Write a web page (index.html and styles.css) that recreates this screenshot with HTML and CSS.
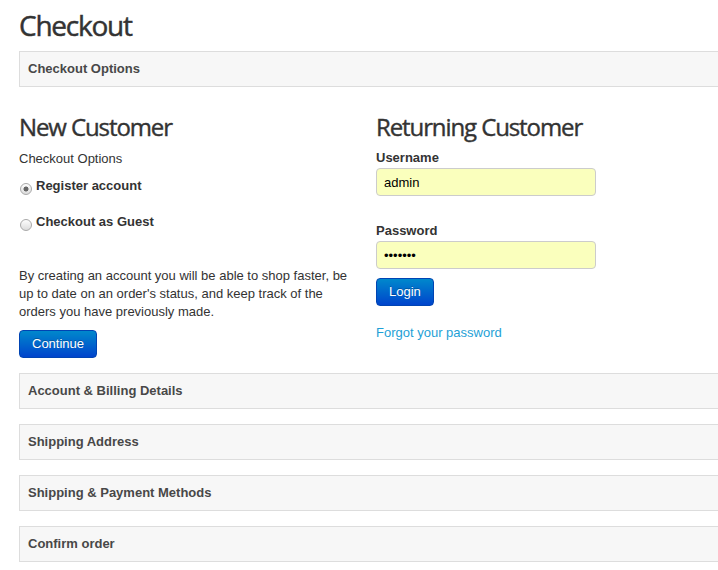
FILE: index.html
```html
<!DOCTYPE html>
<html>
<head>
<meta charset="utf-8">
<title>Checkout</title>
<link rel="stylesheet" href="styles.css">
</head>
<body>
<div class="page">
  <h1 class="page-title">Checkout</h1>
  <div class="panel"><div class="panel-title">Checkout Options</div></div>

  <div class="row">
    <div class="col">
      <h2 class="col-title">New Customer</h2>
      <p class="line">Checkout Options</p>
      <label class="radio first"><input type="radio" name="account" checked><span>Register account</span></label>
      <label class="radio second"><input type="radio" name="account"><span>Checkout as Guest</span></label>
      <p class="info">By creating an account you will be able to shop faster, be up to date on an order's status, and keep track of the orders you have previously made.</p>
      <button class="btn">Continue</button>
    </div>
    <div class="col">
      <h2 class="col-title">Returning Customer</h2>
      <label class="field-label">Username</label>
      <input class="field" type="text" value="admin">
      <label class="field-label pw">Password</label>
      <input class="field" type="password" value="1234567">
      <button class="btn login">Login</button>
      <a class="forgot" href="#">Forgot your password</a>
    </div>
  </div>

  <div class="panel"><div class="panel-title">Account &amp; Billing Details</div></div>
  <div class="panel"><div class="panel-title">Shipping Address</div></div>
  <div class="panel"><div class="panel-title">Shipping &amp; Payment Methods</div></div>
  <div class="panel"><div class="panel-title">Confirm order</div></div>
</div>
</body>
</html>
```
FILE: styles.css
```css
html, body {
  margin: 0;
  padding: 0;
  background: #fff;
  overflow: hidden;
}
body {
  font-family: "Liberation Sans", Arial, sans-serif;
  font-size: 13px;
  line-height: 18px;
  color: #333;
}
.page {
  width: 714px;
  padding-left: 19px;
}
.page-title {
  font-family: "Open Sans", sans-serif;
  font-weight: 400;
  font-size: 28px;
  letter-spacing: -1.25px;
  line-height: 36px;
  color: #333;
  -webkit-text-stroke: 0.45px #333;
  margin: 7px 0 8px;
}
.panel {
  border: 1px solid #ddd;
  background: #f7f7f7;
  margin-bottom: 15px;
}
.panel-title {
  padding: 10px 8px;
  line-height: 14px;
  font-weight: bold;
  color: #484848;
}
.row {
  display: flex;
  margin-top: 24px;
  margin-bottom: 15px;
}
.col {
  width: 357px;
  display: flex;
  flex-direction: column;
  align-items: flex-start;
}
.col-title {
  font-family: "Open Sans", sans-serif;
  font-weight: 400;
  font-size: 24px;
  letter-spacing: -1.1px;
  line-height: 32px;
  color: #333;
  -webkit-text-stroke: 0.4px #333;
  margin: 0;
}
.line {
  margin: 7px 0 0;
}
.radio {
  display: flex;
  align-items: center;
  font-weight: bold;
  height: 18px;
}
.radio input {
  -webkit-appearance: none;
  appearance: none;
  box-sizing: border-box;
  width: 12px;
  height: 12px;
  margin: 5px 4px 0 1px;
  border: 1px solid #a9a9a9;
  border-radius: 50%;
  background: linear-gradient(to bottom, #fdfdfd, #dcdcdc);
}
.radio input:checked {
  background: radial-gradient(circle, #666 0, #666 2.2px, transparent 2.8px), linear-gradient(to bottom, #fdfdfd, #dcdcdc);
}
.radio.first { margin-top: 9px; }
.radio.second { margin-top: 18px; }
.info {
  margin: 36px 0 0;
  width: 335px;
}
.btn {
  margin-top: 9px;
  font-family: "Liberation Sans", Arial, sans-serif;
  font-size: 13px;
  line-height: 18px;
  height: 28px;
  padding: 0 12px;
  color: #fff;
  background: linear-gradient(to bottom, #0088cc, #0044cc);
  border: 1px solid #0044b3;
  border-radius: 4px;
  text-shadow: 0 -1px 0 rgba(0,0,0,0.25);
}
.field-label {
  font-weight: bold;
  margin-top: 6px;
}
.field-label.pw { margin-top: 26px; }
.field {
  box-sizing: border-box;
  width: 220px;
  height: 28px;
  margin: 1px 0 0;
  padding: 0 7px;
  border: 1px solid #ccc;
  border-radius: 4px;
  background: #faffbd;
  font-family: "Liberation Sans", Arial, sans-serif;
  font-size: 13px;
  color: #000;
  outline: none;
}
.btn.login { margin-top: 9px; }
.forgot {
  margin-top: 18px;
  color: #1e9fd6;
  text-decoration: none;
}
```
